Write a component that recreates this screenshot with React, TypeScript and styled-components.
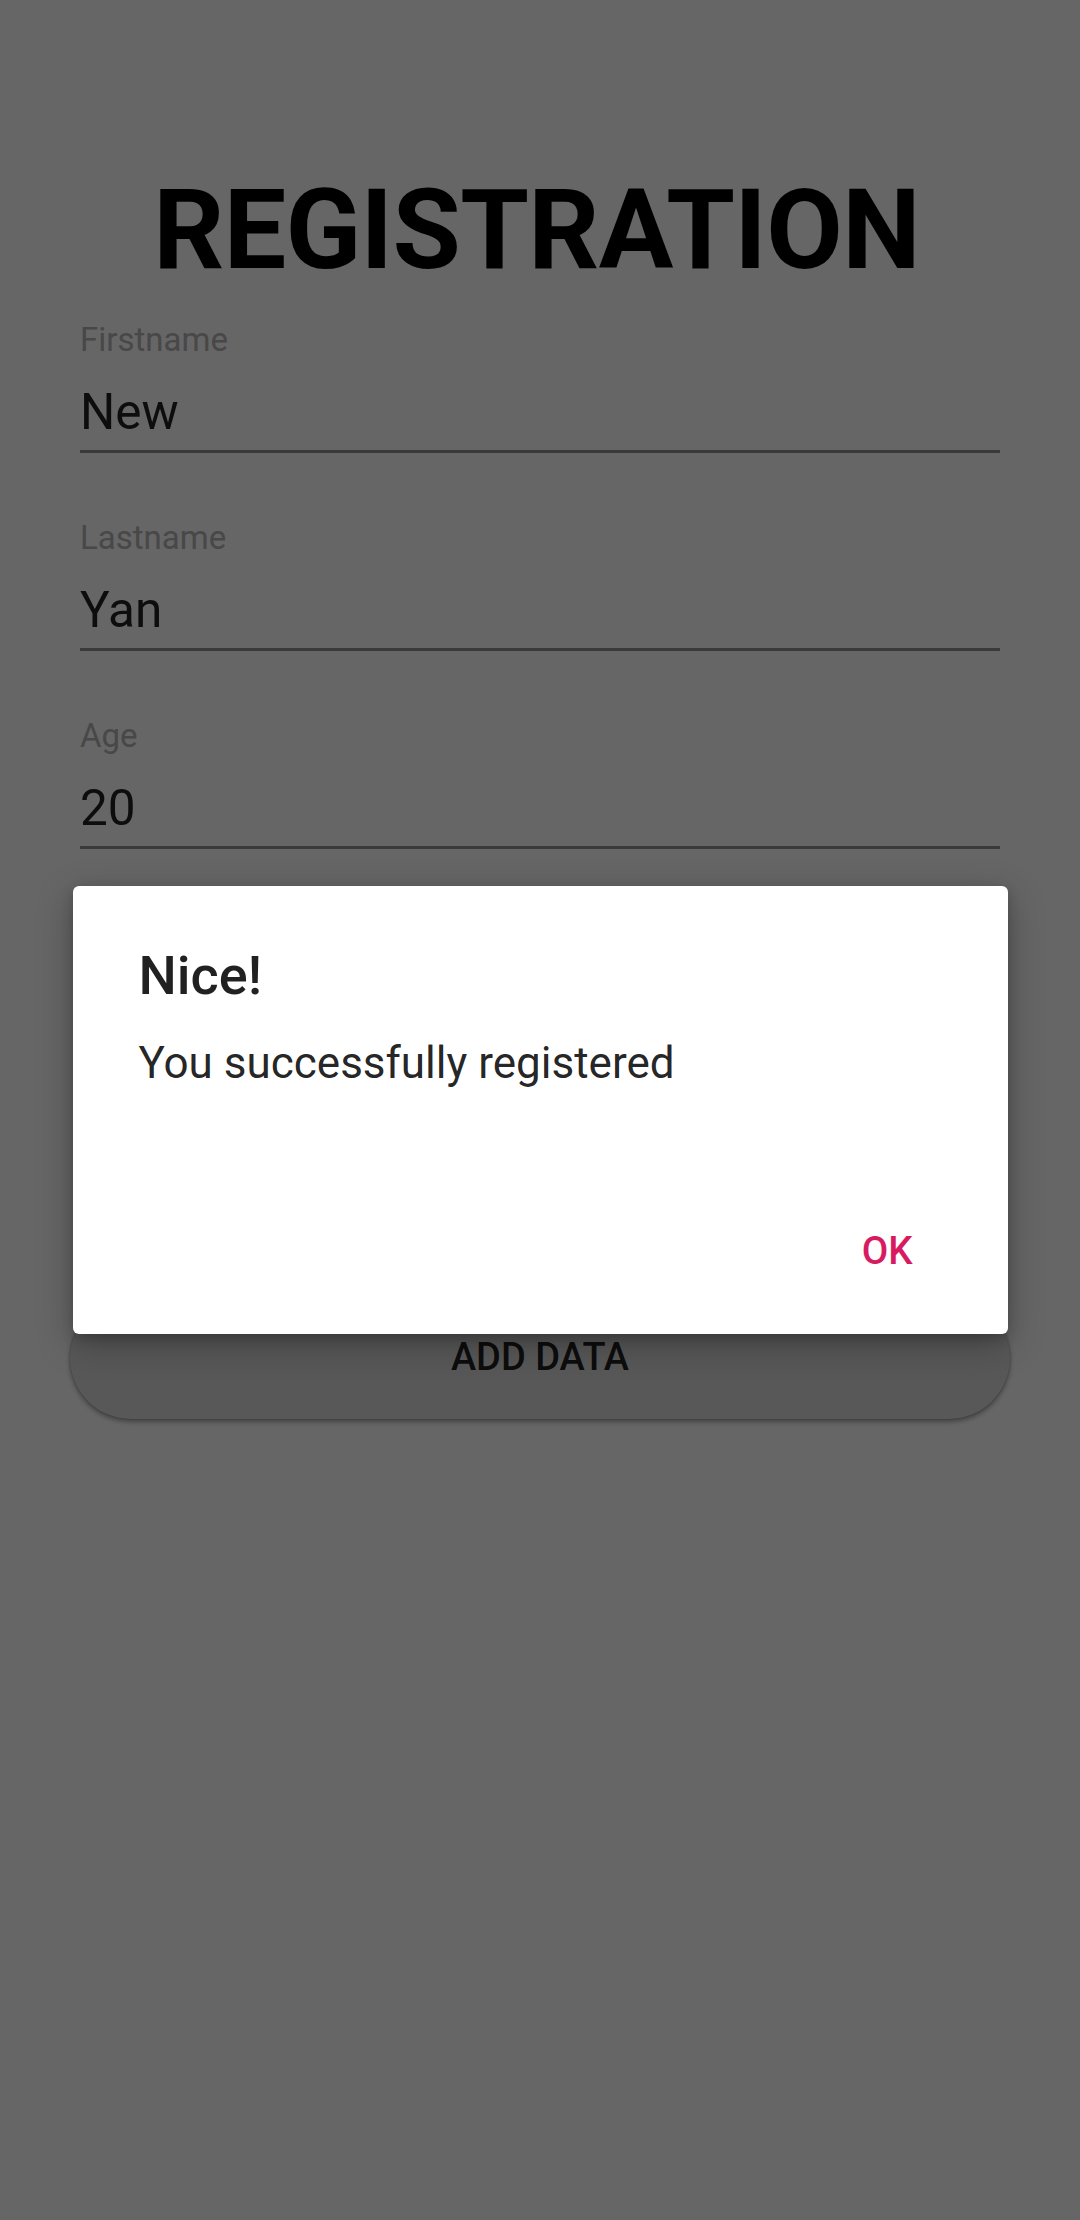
import React from "react";
import styled, { createGlobalStyle } from "styled-components";

const GlobalStyle = createGlobalStyle`
  html, body {
    margin: 0;
    padding: 0;
    background: #ffffff;
  }
  body {
    font-family: Roboto, "Noto Sans", "Liberation Sans", sans-serif;
  }
  * { box-sizing: border-box; }
`;

const Screen = styled.div`
  position: relative;
  width: 1080px;
  height: 2220px;
  overflow: hidden;
  background: #ffffff;
`;

const Title = styled.h1`
  margin: 164px 0 0;
  padding-right: 7px;
  font-family: Roboto, "Liberation Sans", sans-serif;
  font-size: 111px;
  font-weight: 700;
  line-height: 1.2;
  letter-spacing: -0.6px;
  color: #000000;
  text-align: center;
`;

const Form = styled.div`
  display: flex;
  flex-direction: column;
  gap: 65px;
  padding: 0 80px;
  margin-top: 22.6px;
`;

const Field = styled.div`
  display: flex;
  flex-direction: column;
`;

const Label = styled.div`
  font-size: 33px;
  line-height: 1.2;
  color: #b3b3b3;
`;

const Value = styled.div`
  margin-top: 23.9px;
  padding-bottom: 7.2px;
  font-size: 49.5px;
  line-height: 1.2;
  color: rgba(0, 0, 0, 0.87);
  border-bottom: 3px solid #919191;
`;

const SubmitButton = styled.button`
  display: flex;
  align-items: center;
  justify-content: center;
  margin: 448px 70px 0 70px;
  width: 940px;
  height: 122px;
  border: none;
  border-radius: 61px;
  background: #dcdcdc;
  box-shadow: 0 3px 5px rgba(0, 0, 0, 0.35), 0 0 2px rgba(0, 0, 0, 0.25);
  font-family: Roboto, "Liberation Sans", sans-serif;
  font-size: 38px;
  font-weight: 500;
  line-height: 1.2;
  color: rgba(0, 0, 0, 0.87);
  text-transform: uppercase;
`;

const Scrim = styled.div`
  position: absolute;
  inset: 0;
  background: rgba(0, 0, 0, 0.6);
  display: flex;
  align-items: center;
  justify-content: center;
`;

const Dialog = styled.div`
  width: 935px;
  height: 448px;
  background: #ffffff;
  border-radius: 6px;
  box-shadow: 0 10px 36px rgba(0, 0, 0, 0.28), 0 4px 12px rgba(0, 0, 0, 0.18);
  display: flex;
  flex-direction: column;
`;

const DialogContent = styled.div`
  padding: 58px 66px 0;
  display: flex;
  flex-direction: column;
`;

const DialogTitle = styled.div`
  font-size: 54px;
  font-weight: 500;
  line-height: 1.2;
  color: rgba(0, 0, 0, 0.87);
`;

const DialogMessage = styled.div`
  margin-top: 28px;
  font-size: 44px;
  line-height: 1.2;
  color: rgba(0, 0, 0, 0.87);
`;

const DialogActions = styled.div`
  margin-top: auto;
  display: flex;
  justify-content: flex-end;
  padding: 0 95px 60px 0;
`;

const TextButton = styled.button`
  border: none;
  background: transparent;
  padding: 0;
  font-family: Roboto, "Liberation Sans", sans-serif;
  font-size: 38.5px;
  font-weight: 500;
  line-height: 1.2;
  color: #d81b60;
  text-transform: uppercase;
`;

const fields = [
  { label: "Firstname", value: "New" },
  { label: "Lastname", value: "Yan" },
  { label: "Age", value: "20" },
];

export default function App() {
  return (
    <>
      <GlobalStyle />
      <Screen>
        <Title>REGISTRATION</Title>
        <Form>
          {fields.map((f) => (
            <Field key={f.label}>
              <Label>{f.label}</Label>
              <Value>{f.value}</Value>
            </Field>
          ))}
        </Form>
        <SubmitButton>Add data</SubmitButton>
        <Scrim>
          <Dialog>
            <DialogContent>
              <DialogTitle>Nice!</DialogTitle>
              <DialogMessage>You successfully registered</DialogMessage>
            </DialogContent>
            <DialogActions>
              <TextButton>OK</TextButton>
            </DialogActions>
          </Dialog>
        </Scrim>
      </Screen>
    </>
  );
}
